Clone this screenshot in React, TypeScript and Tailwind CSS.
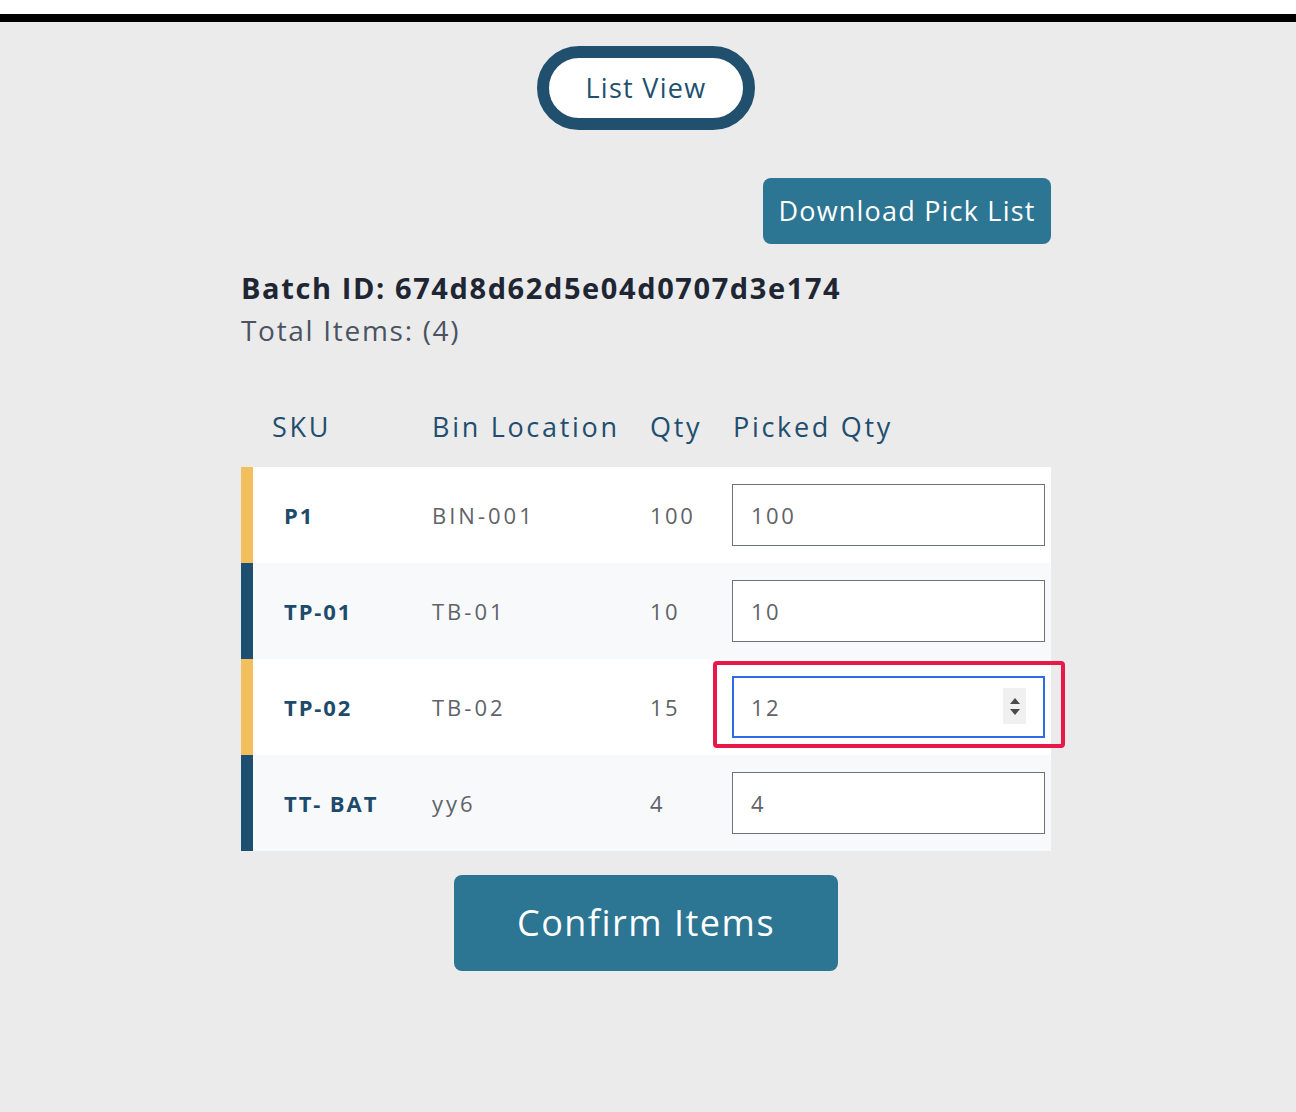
const rows = [
  { sku: "P1", bin: "BIN-001", qty: "100", picked: "100", accent: "bg-[#f2bf5e]", bg: "bg-white" },
  { sku: "TP-01", bin: "TB-01", qty: "10", picked: "10", accent: "bg-[#1f4f70]", bg: "bg-[#f7f9fb]" },
  { sku: "TP-02", bin: "TB-02", qty: "15", picked: "12", accent: "bg-[#f2bf5e]", bg: "bg-white", focused: true },
  { sku: "TT- BAT", bin: "yy6", qty: "4", picked: "4", accent: "bg-[#1f4f70]", bg: "bg-[#f7f9fb]" },
];

export default function App() {
  return (
    <div className="min-h-[1112px] bg-[#ebebeb] font-['Open_Sans',sans-serif]">
      <div className="h-[14px] bg-white" />
      <div className="h-2 bg-black" />

      <div className="flex flex-col items-center pr-1 pt-6">
        {/* view toggle */}
        <button className="h-[84px] w-[218px] rounded-full border-[12px] border-[#21506f] bg-white text-[27px] tracking-[1.3px] text-[#21506f]">
          List View
        </button>

        <div className="w-[810px]">
          <div className="mt-12 flex justify-end">
            <button className="h-[66px] w-[288px] rounded-lg bg-[#2c7593] text-[27px] tracking-[1.2px] text-white">
              Download Pick List
            </button>
          </div>

          <div className="mt-[26px] text-[29px] font-bold leading-[36px] tracking-[1.6px] text-[#1f2633]">
            Batch ID: 674d8d62d5e04d0707d3e174
          </div>
          <div className="mt-[6px] text-[28px] leading-[36px] tracking-[1.7px] text-[#4a5361]">Total Items: (4)</div>

          {/* table header */}
          <div className="mt-[59px] flex h-10 items-center text-[27px] tracking-[2.7px] text-[#1f4e6f]">
            <div className="w-[179px] pl-[31px]">SKU</div>
            <div className="w-[218px] pl-3">Bin Location</div>
            <div className="w-[83px] pl-3">Qty</div>
            <div className="w-[330px] pl-3">Picked Qty</div>
          </div>

          <div className="mt-5">
            {rows.map((r) => (
              <div key={r.sku} className={`flex h-24 items-center ${r.bg}`}>
                <div className={`h-full w-3 ${r.accent}`} />
                <div className="w-[167px] pl-[31px] text-[22px] font-bold tracking-[1.9px] text-[#1e4a6b]">{r.sku}</div>
                <div className="w-[218px] pl-3 text-[22px] tracking-[3px] text-[#5f6368]">{r.bin}</div>
                <div className="w-[83px] pl-3 text-[22px] tracking-[2.5px] text-[#5f6368]">{r.qty}</div>
                <div className="w-[330px] pl-[11px]">
                  {r.focused ? (
                    <div className="relative h-[62px] w-[313px]">
                      <input
                        type="text"
                        defaultValue={r.picked}
                        className="h-full w-full border-2 border-[#2f6be8] bg-white pl-[17px] text-[22px] tracking-[2.5px] text-[#5f6368] outline-none"
                      />
                      <div className="absolute right-[19px] top-[12px] flex h-9 w-[23px] flex-col items-center justify-center gap-[5px] bg-[#f0f0f0]">
                        <div className="h-0 w-0 border-x-[5px] border-b-[6px] border-x-transparent border-b-[#4a4a4a]" />
                        <div className="h-0 w-0 border-x-[5px] border-t-[6px] border-x-transparent border-t-[#4a4a4a]" />
                      </div>
                      {/* highlight frame */}
                      <div className="pointer-events-none absolute -bottom-[10px] -left-[19px] -right-[20px] -top-[15px] rounded-[4px] border-4 border-[#e8194a]" />
                    </div>
                  ) : (
                    <input
                      type="text"
                      defaultValue={r.picked}
                      className="h-[62px] w-[313px] border border-[#6b7280] bg-white pl-[18px] text-[22px] tracking-[2.5px] text-[#5f6368] outline-none"
                    />
                  )}
                </div>
              </div>
            ))}
          </div>

          <div className="mt-6 flex justify-center">
            <button className="h-24 w-[384px] rounded-lg bg-[#2c7593] text-[36px] tracking-[1.5px] text-white">
              Confirm Items
            </button>
          </div>
        </div>
      </div>
    </div>
  );
}
